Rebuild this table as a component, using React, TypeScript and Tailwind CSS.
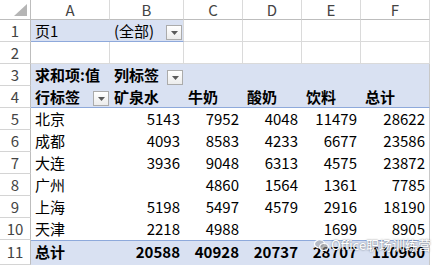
import React from 'react'

// Excel-style pivot table: sales by city and drink
interface Cell {
  text?: string
  bold?: boolean
  right?: boolean
  dropdown?: boolean
}

const widths = ['w-[79px]', 'w-[74px]', 'w-[59px]', 'w-[59px]', 'w-[59px]', 'w-[69px]']
const letters = ['A', 'B', 'C', 'D', 'E', 'F']

const data: [string, string, string, string, string, string][] = [
  ['北京', '5143', '7952', '4048', '11479', '28622'],
  ['成都', '4093', '8583', '4233', '6677', '23586'],
  ['大连', '3936', '9048', '6313', '4575', '23872'],
  ['广州', '', '4860', '1564', '1361', '7785'],
  ['上海', '5198', '5497', '4579', '2916', '18190'],
  ['天津', '2218', '4988', '', '1699', '8905'],
]

function Dropdown() {
  return (
    <div className="ml-auto mr-[1px] mb-[1px] self-end w-[16px] h-[15px] border border-[#ababab] bg-gradient-to-b from-white to-[#ececec] flex items-center justify-center">
      <svg width="7" height="4" viewBox="0 0 7 4">
        <path d="M0 0h7L3.5 4z" fill="#5a5a5a" />
      </svg>
    </div>
  )
}

function RowHead({ n }: { n: number }) {
  return (
    <div className="w-[31px] shrink-0 border-r border-b border-r-[#bdbdbd] border-b-[#d4d4d4] flex items-center justify-center text-[#444]">
      {n}
    </div>
  )
}

function CellBox({ cell, i, className }: { cell: Cell; i: number; className: string }) {
  return (
    <div
      className={`${widths[i]} shrink-0 flex items-center px-[4px] ${cell.right ? 'justify-end' : ''} ${cell.bold ? 'font-bold' : ''} ${className}`}
    >
      {cell.text && <span className="whitespace-nowrap">{cell.text}</span>}
      {cell.dropdown && <Dropdown />}
    </div>
  )
}

export default function App() {
  const grid = 'border-r border-b border-[#dadada]'
  const blue = 'bg-[#d9e1f2]'

  return (
    <div
      className="relative w-[432px] h-[265px] overflow-hidden bg-white text-[15px] leading-[22px] text-black"
      style={{ fontFamily: '"Noto Sans CJK SC", "Noto Sans", sans-serif' }}
    >
      {/* column header */}
      <div className="flex h-[20px]">
        <div className="w-[31px] shrink-0 border-r border-b border-[#bdbdbd] relative">
          <svg className="absolute right-[3px] bottom-[3px]" width="13" height="12" viewBox="0 0 13 12">
            <path d="M13 0v12H0z" fill="#b5b5b5" />
          </svg>
        </div>
        {letters.map((l, i) => (
          <div
            key={l}
            className={`${widths[i]} shrink-0 border-r border-b border-r-[#dadada] border-b-[#bdbdbd] flex items-center justify-center text-[#444] leading-[20px]`}
          >
            {l}
          </div>
        ))}
      </div>

      {/* row 1: page field */}
      <div className="flex h-[22px]">
        <RowHead n={1} />
        <CellBox cell={{ text: '页1' }} i={0} className={`${blue} border-b border-[#8ea9db]`} />
        <CellBox cell={{ text: '(全部)', dropdown: true }} i={1} className={`${blue} border-b border-b-[#8ea9db] border-r border-r-[#dadada] pr-0`} />
        {[2, 3, 4, 5].map((i) => (
          <CellBox key={i} cell={{}} i={i} className={grid} />
        ))}
      </div>

      {/* row 2 */}
      <div className="flex h-[22px]">
        <RowHead n={2} />
        {[0, 1, 2, 3, 4, 5].map((i) => (
          <CellBox key={i} cell={{}} i={i} className={grid} />
        ))}
      </div>

      {/* row 3 */}
      <div className="flex h-[22px]">
        <RowHead n={3} />
        <CellBox cell={{ text: '求和项:值', bold: true }} i={0} className={blue} />
        <CellBox cell={{ text: '列标签', bold: true, dropdown: true }} i={1} className={`${blue} pr-0`} />
        <CellBox cell={{}} i={2} className={blue} />
        <CellBox cell={{}} i={3} className={blue} />
        <CellBox cell={{}} i={4} className={blue} />
        <CellBox cell={{}} i={5} className={`${blue} border-r border-[#c8c8c8]`} />
      </div>

      {/* row 4 */}
      <div className="flex h-[22px]">
        <RowHead n={4} />
        <CellBox cell={{ text: '行标签', bold: true, dropdown: true }} i={0} className={`${blue} border-b border-[#8ea9db] pr-0`} />
        {['矿泉水', '牛奶', '酸奶', '饮料', '总计'].map((t, k) => (
          <CellBox
            key={t}
            cell={{ text: t, bold: true }}
            i={k + 1}
            className={`${blue} border-b border-b-[#8ea9db] ${k === 4 ? 'border-r border-r-[#c8c8c8]' : ''}`}
          />
        ))}
      </div>

      {/* data rows */}
      {data.map((row, r) => (
        <div key={row[0]} className="flex h-[22px]">
          <RowHead n={r + 5} />
          {row.map((v, i) => (
            <CellBox
              key={i}
              cell={{ text: v, right: i > 0 }}
              i={i}
              className={i === 5 ? 'border-r border-[#c8c8c8]' : ''}
            />
          ))}
        </div>
      ))}

      {/* row 11: grand total */}
      <div className="flex h-[25px]">
        <RowHead n={11} />
        {['总计', '20588', '40928', '20737', '28707', '110960'].map((v, i) => (
          <CellBox
            key={i}
            cell={{ text: v, bold: true, right: i > 0 }}
            i={i}
            className={`${blue} border-t border-t-[#8ea9db] items-start ${i === 5 ? 'border-r border-r-[#c8c8c8]' : ''}`}
          />
        ))}
      </div>

      {/* watermark */}
      <div className="absolute left-[314px] top-[237px] flex items-center gap-[2px] text-white text-[13px] leading-[16px] [text-shadow:0_0_2px_rgba(0,0,0,0.55)]">
        <svg width="15" height="13" viewBox="0 0 15 13" fill="none" stroke="white" strokeWidth="1.2">
          <ellipse cx="5.5" cy="5" rx="5" ry="4" fill="rgba(120,120,120,0.35)" />
          <ellipse cx="10" cy="8" rx="4.3" ry="3.5" fill="rgba(140,140,140,0.6)" />
        </svg>
        <span>Office职场训练营</span>
      </div>
    </div>
  )
}
